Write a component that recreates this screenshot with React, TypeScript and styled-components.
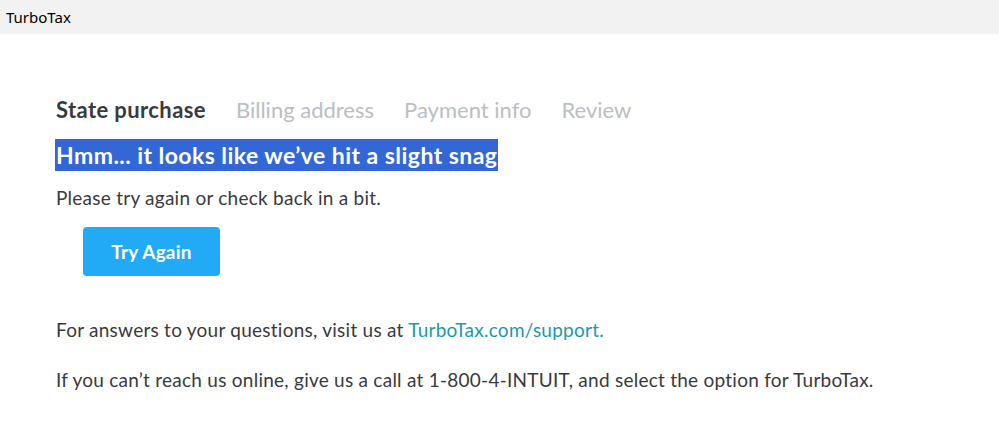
import React from "react";
import styled, { createGlobalStyle } from "styled-components";

const Global = createGlobalStyle`
  html, body { margin: 0; padding: 0; background: #fff; }
  body { font-family: Lato, "Noto Sans", sans-serif; color: #393a3d; }
`;

const TitleBar = styled.div`
  height: 34px;
  background: #f2f2f2;
  display: flex;
  align-items: center;
  padding-left: 6px;
  font-family: "Noto Sans", "Open Sans", sans-serif;
  font-size: 15px;
  color: #000;
`;

const Main = styled.main`
  padding: 61px 0 0 56px;
  display: flex;
  flex-direction: column;
`;

const Steps = styled.nav`
  display: flex;
  gap: 30px;
  font-size: 22px;
  line-height: 30px;
`;

const Step = styled.span<{ $active?: boolean }>`
  font-weight: ${(p) => (p.$active ? 700 : 400)};
  letter-spacing: ${(p) => (p.$active ? "0.4px" : "0")};
  color: ${(p) => (p.$active ? "#393a3d" : "#babec5")};
`;

const Heading = styled.h1`
  margin: 14px 0 0 -1px;
  align-self: flex-start;
  background: #3367d6;
  color: #fff;
  font-size: 23px;
  line-height: 32px;
  font-weight: 700;
  letter-spacing: 0.45px;
  padding: 0 1px;
`;

const Text = styled.p<{ $mt: number }>`
  margin: ${(p) => p.$mt}px 0 0;
  font-size: 19px;
  line-height: 24px;
  letter-spacing: 0.25px;
`;

const Button = styled.button`
  margin: 17px 0 0 27px;
  align-self: flex-start;
  width: 137px;
  height: 49px;
  border: none;
  border-radius: 4px;
  background: #21abf6;
  color: #fff;
  font-family: inherit;
  font-size: 19px;
  font-weight: 700;
  letter-spacing: 0.2px;
`;

const Link = styled.a`
  color: #1e98a8;
  text-decoration: none;
`;

export default function App() {
  return (
    <>
      <Global />
      <TitleBar>TurboTax</TitleBar>
      <Main>
        <Steps>
          <Step $active>State purchase</Step>
          <Step>Billing address</Step>
          <Step>Payment info</Step>
          <Step>Review</Step>
        </Steps>
        <Heading>Hmm... it looks like we’ve hit a slight snag</Heading>
        <Text $mt={15}>Please try again or check back in a bit.</Text>
        <Button>Try Again</Button>
        <Text $mt={42}>
          For answers to your questions, visit us at <Link href="#">TurboTax.com/support.</Link>
        </Text>
        <Text $mt={26}>
          If you can’t reach us online, give us a call at 1-800-4-INTUIT, and select the option for TurboTax.
        </Text>
      </Main>
    </>
  );
}
